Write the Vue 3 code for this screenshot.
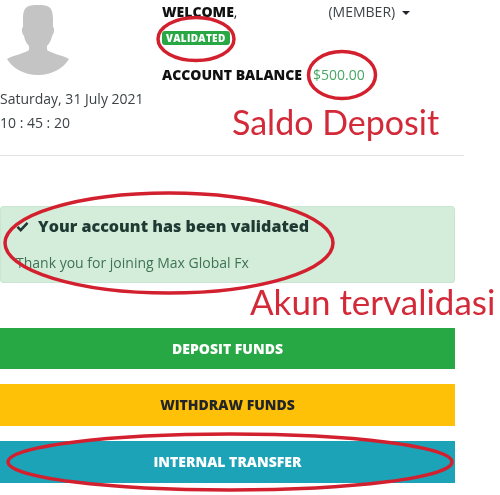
<template>
  <div class="page">
    <header class="top">
      <div class="profile">
        <svg class="avatar" viewBox="0 0 76 76" width="76" height="76">
          <path fill="#c4c4c4" d="M38 5C49 5 53 7 53 19L53 27C55 28 54 34 52 36C51 41 49 44 47 46L47 50C50 53 62 55 69 59C63 69 51 75 38 75C25 75 13 69 7 59C14 55 26 53 29 50L29 46C27 44 25 41 24 36C22 34 21 28 23 27L23 19C23 7 27 5 38 5Z"/>
        </svg>
        <div class="date">Saturday, 31 July 2021</div>
        <div class="time">10 : 45 : 20</div>
      </div>
      <div class="account">
        <div class="welcome-row">
          <span><b>WELCOME</b>,</span>
          <span class="member">(MEMBER)<i class="caret"></i></span>
        </div>
        <span class="badge">VALIDATED</span>
        <div class="balance"><b>ACCOUNT BALANCE</b><span class="amount">$500.00</span></div>
      </div>
    </header>
    <hr class="divider" />

    <section class="alert">
      <h4>
        <svg class="check" viewBox="0 0 14 12" width="13" height="11">
          <path d="M1.5 6.5L5 10L12.5 2" fill="none" stroke="#1f3a33" stroke-width="2.8" />
        </svg>
        Your account has been validated
      </h4>
      <p>Thank you for joining Max Global Fx</p>
    </section>

    <div class="actions">
      <a class="btn green">DEPOSIT FUNDS</a>
      <a class="btn yellow">WITHDRAW FUNDS</a>
      <a class="btn teal">INTERNAL TRANSFER</a>
    </div>

    <!-- hand-drawn annotations sitting over the screenshot -->
    <svg class="marks" viewBox="0 0 500 495" width="500" height="495">
      <ellipse cx="196" cy="39" rx="38" ry="21.5" />
      <ellipse cx="342" cy="75" rx="33.5" ry="23.5" />
      <ellipse cx="169" cy="243" rx="164" ry="50" />
      <ellipse cx="230" cy="462" rx="222" ry="28" />
    </svg>
    <span class="note saldo">Saldo Deposit</span>
    <span class="note akun">Akun tervalidasi</span>
  </div>
</template>

<script setup>
</script>

<style>
html, body {
  margin: 0;
  background: #fff;
}
</style>

<style scoped>
.page {
  position: relative;
  width: 500px;
  height: 495px;
  overflow: hidden;
  font-family: "Open Sans", sans-serif;
  font-size: 14px;
  color: #212529;
  filter: blur(0.35px);
}

.top {
  display: flex;
  width: 464px;
  height: 155px;
}

.profile {
  width: 162px;
}

.avatar {
  display: block;
}

.date {
  margin-top: 14px;
  line-height: 18px;
  color: #3d4347;
}

.time {
  margin-top: 6px;
  line-height: 18px;
  color: #3d4347;
}

.account {
  display: flex;
  flex-direction: column;
  align-items: flex-start;
  padding-top: 3px;
}

.account b {
  color: #111;
  font-weight: 800;
}

.welcome-row {
  display: flex;
  line-height: 18px;
}

.member {
  margin-left: 91px;
  color: #3d4347;
}

.caret {
  display: inline-block;
  margin-left: 7px;
  vertical-align: 2px;
  border-top: 4px solid #212529;
  border-left: 4px solid transparent;
  border-right: 4px solid transparent;
}

.badge {
  margin-top: 10px;
  padding: 0 4px;
  height: 14px;
  line-height: 14px;
  background: #28a745;
  border-radius: 3px;
  color: #fff;
  font-size: 10px;
  font-weight: 800;
  letter-spacing: 0.3px;
}

.balance {
  display: flex;
  gap: 11px;
  margin-top: 21px;
  line-height: 18px;
}

.amount {
  color: #46a865;
}

.divider {
  width: 464px;
  height: 1px;
  margin: 0;
  border: 0;
  background: #e2e2e2;
}

.alert {
  box-sizing: border-box;
  width: 455px;
  height: 77px;
  margin-top: 50px;
  padding: 8px 15px 0;
  background: #d4edda;
  border: 1px solid #c9e6d1;
  border-radius: 3px;
}

.alert h4 {
  display: flex;
  align-items: center;
  gap: 9px;
  margin: 0;
  line-height: 22px;
  font-size: 16.1px;
  font-weight: 800;
  color: #1f3a33;
}

.alert p {
  margin: 17px 0 0;
  line-height: 18px;
  font-size: 14px;
  color: #3f7355;
}

.actions {
  display: flex;
  flex-direction: column;
  gap: 15px;
  width: 455px;
  margin-top: 44.6px;
}

.btn {
  height: 41.7px;
  line-height: 41.7px;
  text-align: center;
  font-size: 14px;
  font-weight: 800;
}

.green {
  background: #28a745;
  color: #fff;
}

.yellow {
  background: #ffc107;
  color: #212529;
}

.teal {
  background: #1ca3b8;
  color: #fff;
}

.marks {
  position: absolute;
  top: 0;
  left: 0;
  fill: none;
  stroke: #d3202f;
  stroke-width: 3.5;
}

.note {
  position: absolute;
  font-family: Lato, sans-serif;
  font-size: 34px;
  line-height: 40px;
  color: #d32a3a;
  white-space: nowrap;
}

.saldo {
  left: 232px;
  top: 102px;
}

.akun {
  left: 250px;
  top: 281px;
  font-size: 35px;
}
</style>
